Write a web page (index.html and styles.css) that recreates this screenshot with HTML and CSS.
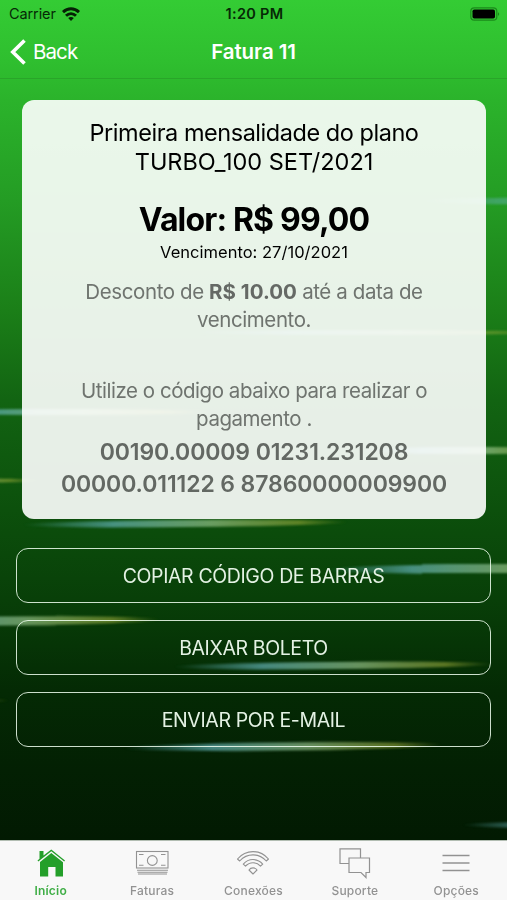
FILE: index.html
```html
<!DOCTYPE html>
<html lang="pt-BR">

<head>
  <meta charset="UTF-8">
  <meta name="viewport" content="width=device-width, initial-scale=1.0">
  <title>Fatura 11</title>
  <link rel="stylesheet" href="styles.css">
</head>

<body>
  <div class="app">
    <!-- light streaks -->
    <svg class="streaks" viewBox="0 0 507 840" width="507" height="840">
      <defs>
        <linearGradient id="streak">
          <stop offset="0" stop-color="#5fb0b8" stop-opacity="0" />
          <stop offset=".28" stop-color="#62b0b4" stop-opacity=".7" />
          <stop offset=".58" stop-color="#9cc890" stop-opacity=".65" />
          <stop offset=".85" stop-color="#9fae3c" stop-opacity=".55" />
          <stop offset="1" stop-color="#9fae3c" stop-opacity="0" />
        </linearGradient>
        <filter id="soft" x="-5%" y="-100%" width="110%" height="300%">
          <feGaussianBlur stdDeviation="1 .9" />
        </filter>
      </defs>
      <g fill="url(#streak)" filter="url(#soft)">
        <ellipse cx="560" cy="201" rx="140" ry="3.500" opacity=".65" />
        <ellipse cx="370" cy="332.500" rx="180" ry="2.500" opacity=".8" />
        <ellipse cx="60" cy="412" rx="150" ry="3" />
        <ellipse cx="470" cy="450.500" rx="110" ry="3.500" />
        <ellipse cx="-60" cy="480.500" rx="100" ry="2.500" />
        <ellipse cx="185" cy="523.500" rx="163" ry="3.500" transform="rotate(-.5 185 523)" />
        <ellipse cx="480" cy="568.500" rx="155" ry="4.500" transform="rotate(-.5 480 569)" />
        <ellipse cx="0" cy="621" rx="160" ry="4.500" transform="rotate(-.5 0 621)" />
        <ellipse cx="333" cy="665.500" rx="160" ry="3.500" transform="rotate(-.5 333 665)" />
        <ellipse cx="-80" cy="700.500" rx="90" ry="2.500" opacity=".6" />
        <ellipse cx="283" cy="746.500" rx="160" ry="4" transform="rotate(-.6 283 746)" />
        <ellipse cx="600" cy="825" rx="138" ry="3.500" />
      </g>
    </svg>

    <header class="header">
      <div class="status">
        <div class="carrier">
          <span>Carrier</span>
          <svg viewBox="0 0 18 14" width="18" height="14">
            <g fill="none" stroke="#052005" stroke-width="2.900">
              <path d="M1 5.100C5.700.6 12.300.6 17 5.100" />
              <path d="M4 8.800c3-2.900 7-2.900 10 0" />
            </g>
            <path d="M6.200 11.100c1.700-1.500 3.900-1.500 5.600 0L9 14z" fill="#052005" />
          </svg>
        </div>
        <div class="time">1:20 PM</div>
        <div class="battery">
          <svg viewBox="0 0 30 14" width="30" height="14">
            <rect x=".8" y=".8" width="26" height="12.400" rx="3.500" fill="none" stroke="#1b8a1b" stroke-width="1.200" />
            <rect x="2.500" y="2.500" width="22.500" height="9" rx="1.800" />
            <path d="M28 5.200c1.600.5 1.600 3.100 0 3.600z" fill="#1b8a1b" />
          </svg>
        </div>
      </div>
      <nav class="navbar">
        <a class="back" href="#">
          <svg viewBox="0 0 16 26" width="16" height="26">
            <path d="M14.500 1.500 2.800 13l11.700 11.500" fill="none" stroke="#fff" stroke-width="3.600" />
          </svg>
          <span>Back</span>
        </a>
        <h1 class="title">Fatura 11</h1>
      </nav>
    </header>

    <main class="main">
      <section class="card">
        <h2 class="plan">Primeira mensalidade do plano<br><span class="plan-code">TURBO_100 SET/2021</span></h2>
        <p class="value">Valor: R$ 99,00</p>
        <p class="due">Vencimento: 27/10/2021</p>
        <p class="text discount">Desconto de <b>R$ 10.00</b> até a data de<br>vencimento.</p>
        <p class="text help">Utilize o código abaixo para realizar o<br>pagamento .</p>
        <p class="barcode">00190.00009 01231.231208<br>00000.011122 6 87860000009900</p>
      </section>

      <div class="actions">
        <button class="btn">COPIAR CÓDIGO DE BARRAS</button>
        <button class="btn">BAIXAR BOLETO</button>
        <button class="btn">ENVIAR POR E-MAIL</button>
      </div>
    </main>

    <footer class="tabs">
      <a class="tab is-active" href="#">
        <svg viewBox="0 0 36 32" width="36" height="32">
          <path d="M6.500 3h4v4.500L18.300 1.500 32 12.500l-.8 1L18.300 3.300 5.300 13.500l-.8-1 2-1.700z" fill="#249f2a" />
          <path d="M18.300 5 30 14.200V28.500h-7.500V19h-7.300v9.500H7V14z" fill="#249f2a" />
        </svg>
        <span>Início</span>
      </a>
      <a class="tab" href="#">
        <svg viewBox="0 0 36 32" width="36" height="32">
          <g fill="none" stroke="#929292" stroke-width="1.100">
            <rect x="2.500" y="3.500" width="31.500" height="16.500" />
            <circle cx="18.300" cy="12.500" r="4.900" />
            <path d="M5 6.500h4.500M27 6.500h4.500M5 17.300h4.500M27 17.300h4.500M3 22.300h31M3.500 24.200h30M4 26h29" />
          </g>
        </svg>
        <span>Faturas</span>
      </a>
      <a class="tab" href="#">
        <svg viewBox="0 0 36 32" width="36" height="32">
          <g fill="none" stroke="#929292" stroke-width="1.100" stroke-linejoin="round">
            <path d="M2.500 11C11 1.200 25 1.200 33.500 11L31.300 13C24 4.800 12 4.800 4.700 13z" />
            <path d="M8.300 16.200C13.500 10 22.500 10 27.700 16.200L25.500 18.200C21.400 13.500 14.600 13.500 10.500 18.200z" />
            <path d="M14 22c1.800-2.800 6.200-2.800 8 0L18 26z" />
          </g>
        </svg>
        <span>Conexões</span>
      </a>
      <a class="tab" href="#">
        <svg viewBox="0 0 36 32" width="36" height="32">
          <g fill="none" stroke="#929292" stroke-width="1.200">
            <path d="M12 15.500H3V.8h20.500V10" />
            <path d="M12 10h20.500v14.500H29V29.500l-5-5H12z" />
          </g>
        </svg>
        <span>Suporte</span>
      </a>
      <a class="tab" href="#">
        <svg viewBox="0 0 36 32" width="36" height="32">
          <path d="M4.500 7.500h27M4.500 15h27M4.500 22.500h27" fill="none" stroke="#929292" stroke-width="1.300" />
        </svg>
        <span>Opções</span>
      </a>
    </footer>
  </div>
</body>

</html>
```
FILE: styles.css
```css
* {
  box-sizing: border-box;
  padding: 0;
  margin: 0;
}

body {
  font-family: Inter, "Liberation Sans", sans-serif;
  color: #000;
}

a {
  color: inherit;
  text-decoration: none;
}

.app {
  position: relative;
  display: flex;
  flex-direction: column;
  width: 507px;
  height: 900px;
  overflow: hidden;
  background: linear-gradient(#34cc34 0, #2fbf2f 60px, #2bb32b 100px, #249c24 200px, #1b7f18 310px, #126412 400px, #0c500c 510px, #083f08 600px, #042a04 690px, #032003 770px, #021a02 840px);
}

.streaks {
  position: absolute;
  top: 0;
  left: 0;
}

.header {
  height: 79px;
  border-bottom: 1px solid #29a529;
}

.status {
  display: grid;
  grid-template-columns: 1fr auto 1fr;
  height: 27px;
  align-items: center;
  padding: 0 7px 0 9px;
  font-size: 14.5px;
  color: #062806;
}

.carrier {
  display: flex;
  align-items: center;
  gap: 6px;
  letter-spacing: -.1px;
}

.time {
  font-weight: 600;
  letter-spacing: .3px;
}

.battery {
  display: flex;
  justify-content: flex-end;
}

.navbar {
  display: grid;
  grid-template-columns: 1fr auto 1fr;
  height: 49px;
  align-items: center;
  padding: 0 10px;
  color: #fff;
}

.back {
  display: flex;
  align-items: center;
  gap: 7px;
  font-size: 20.5px;
  letter-spacing: -.9px;
}

.title {
  font-size: 20.5px;
  font-weight: 600;
  letter-spacing: -.1px;
}

.main {
  position: relative;
  flex: 1;
  padding: 21px 16px 0;
}

.card {
  height: 419px;
  margin: 0 5px 0 6px;
  padding-top: 18px;
  border-radius: 12px;
  background: rgba(255, 255, 255, .9);
  text-align: center;
}

.plan {
  font-size: 23.5px;
  font-weight: 400;
  line-height: 29px;
  letter-spacing: -.46px;
}

.plan-code {
  letter-spacing: -.02px;
}

.value {
  margin-top: 25px;
  font-size: 32px;
  font-weight: 700;
  line-height: 38px;
  letter-spacing: -.85px;
}

.due {
  margin-top: 2px;
  font-size: 16.5px;
  line-height: 22px;
  letter-spacing: .02px;
}

.text {
  font-size: 20.5px;
  line-height: 28px;
  letter-spacing: -.4px;
  color: #6f746f;
}

.discount {
  margin-top: 15px;
}

.text b {
  font-weight: 700;
  letter-spacing: 0;
  color: #656965;
}

.help {
  margin-top: 43px;
  letter-spacing: -.46px;
}

.barcode {
  margin-top: 3px;
  font-size: 23px;
  font-weight: 600;
  line-height: 32px;
  letter-spacing: -.1px;
  color: #636863;
}

.actions {
  display: flex;
  flex-direction: column;
  gap: 17px;
  margin-top: 29px;
}

.btn {
  height: 55px;
  border: 1px solid rgba(240, 255, 240, .85);
  border-radius: 12px;
  background: none;
  font-family: inherit;
  font-size: 19.5px;
  letter-spacing: -.38px;
  color: #e4f2e4;
}

.tabs {
  position: relative;
  display: grid;
  grid-template-columns: repeat(5, 1fr);
  height: 60px;
  border-top: 1px solid #b2bdb2;
  background: #f8f8f8;
}

.tab {
  display: flex;
  flex-direction: column;
  align-items: center;
  padding-top: 7px;
  font-size: 12px;
  font-weight: 500;
  line-height: 15px;
  letter-spacing: .2px;
  color: #929292;
}

.tab span {
  margin-top: 3px;
}

.is-active {
  font-weight: 600;
  color: #3fae46;
}
```
